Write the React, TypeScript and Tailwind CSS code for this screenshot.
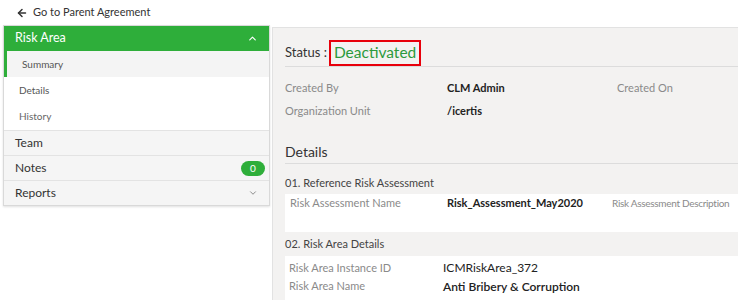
import { ArrowLeft, ChevronUp, ChevronDown } from "lucide-react";

const font = { fontFamily: 'Lato, "Noto Sans", sans-serif' };

function FieldRow({ label, value }: { label: string; value: string }) {
  return (
    <div className="flex items-center h-[23px]">
      <div className="w-[162px] text-[11px] text-[#8a8a8a]">{label}</div>
      <div className="text-[11px] text-[#222] font-bold">{value}</div>
    </div>
  );
}

export default function App() {
  return (
    <div className="w-[738px] h-[300px] bg-white overflow-hidden relative" style={font}>
      {/* back link */}
      <div className="h-[25px] flex items-center pl-[16px] gap-[5px] text-[11px] text-[#333]">
        <ArrowLeft className="w-[12px] h-[12px]" strokeWidth={3} />
        <span>Go to Parent Agreement</span>
      </div>

      <div className="flex">
        {/* sidebar */}
        <div className="ml-[3px] w-[267px] shrink-0">
          <div className="border border-[#d9d9d9] shadow-[0_1px_2px_rgba(0,0,0,0.12)]">
            <div className="h-[25px] bg-[#2eae3a] flex items-center justify-between px-[11px] text-white text-[12.5px]">
              <span>Risk Area</span>
              <ChevronUp className="w-[11px] h-[11px]" strokeWidth={2.5} />
            </div>
            <div className="h-[26px] bg-[#f4f4f4] border-l-[3px] border-[#2eae3a] flex items-center pl-[15px] text-[10px] text-[#555]">
              Summary
            </div>
            <div className="h-[26px] bg-white flex items-center pl-[15px] text-[10px] text-[#555]">Details</div>
            <div className="h-[27px] bg-white flex items-center pl-[15px] text-[10px] text-[#666]">History</div>
            <div className="h-[25px] bg-[#f5f5f5] border-t border-[#e3e3e3] flex items-center px-[11px] text-[12px] text-[#333]">
              Team
            </div>
            <div className="h-[25px] bg-[#f5f5f5] border-t border-[#e3e3e3] flex items-center justify-between px-[11px] pr-[4px] text-[12px] text-[#333]">
              <span>Notes</span>
              <span className="w-[24px] h-[15px] rounded-full bg-[#2eae3a] text-white text-[10px] flex items-center justify-center">0</span>
            </div>
            <div className="h-[25px] bg-[#f5f5f5] border-t border-[#e3e3e3] flex items-center justify-between px-[11px] text-[12px] text-[#333]">
              <span>Reports</span>
              <ChevronDown className="w-[10px] h-[10px] text-[#777]" strokeWidth={2} />
            </div>
          </div>
        </div>

        {/* content */}
        <div className="ml-[2px] mt-[2px] flex-1 min-w-0 bg-[#f3f2f1] border-l border-t border-[#e2e2e2] h-[300px] pl-[12px]">
          <div className="h-[39px] flex items-end border-b border-[#dcdcdc]">
            <span className="text-[13px] text-[#333] mb-[4px]">Status :</span>
            <span className="ml-[2px] border-2 border-[#e8000b] px-[3px] h-[26px] flex items-center text-[15.5px] text-[#2c9a3c]">
              Deactivated
            </span>
          </div>

          <div className="mt-[10px] flex">
            <div className="w-[332px]">
              <FieldRow label="Created By" value="CLM Admin" />
              <FieldRow label="Organization Unit" value="/icertis" />
            </div>
            <div className="h-[23px] flex items-center text-[11px] text-[#8a8a8a]">Created On</div>
          </div>

          <div className="mt-[17px] h-[24px] flex items-center border-b border-[#dcdcdc] text-[14px] text-[#333]">
            Details
          </div>

          <div className="h-[30px] flex items-center pt-[8px] text-[11px] text-[#444]">01. Reference Risk Assessment</div>
          <div className="bg-white h-[38px] pl-[5px] pt-[1px]">
            <div className="flex items-center h-[17px]">
              <div className="w-[157px] shrink-0 text-[11px] text-[#8a8a8a]">Risk Assessment Name</div>
              <div className="w-[165px] shrink-0 text-[11px] text-[#222] font-bold">Risk_Assessment_May2020</div>
              <div className="text-[10px] tracking-[-0.3px] text-[#8a8a8a] whitespace-nowrap">Risk Assessment Description</div>
            </div>
          </div>

          <div className="h-[24px] flex items-center text-[11px] text-[#444]">02. Risk Area Details</div>
          <div className="bg-white h-[45px] pl-[4px] pt-[2px]">
            <div className="flex items-center h-[20px]">
              <div className="w-[154px] text-[11px] text-[#8a8a8a]">Risk Area Instance ID</div>
              <div className="text-[12px] text-[#222]">ICMRiskArea_372</div>
            </div>
            <div className="flex items-center h-[17px]">
              <div className="w-[154px] text-[11px] text-[#8a8a8a]">Risk Area Name</div>
              <div className="text-[12px] text-[#222] font-semibold">Anti Bribery &amp; Corruption</div>
            </div>
          </div>
        </div>
      </div>
    </div>
  );
}
